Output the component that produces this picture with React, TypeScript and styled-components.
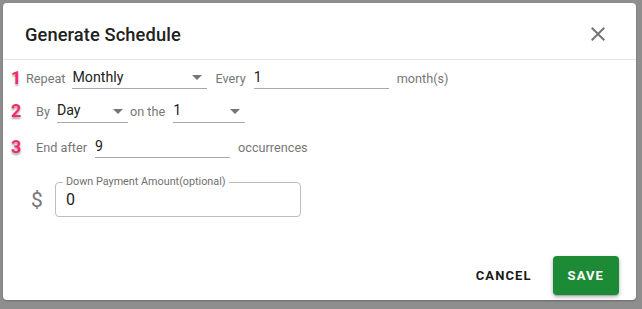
import { createGlobalStyle, styled } from "styled-components";

const GlobalStyle = createGlobalStyle`
    html, body {
        margin: 0;
        padding: 0;
        width: 642px;
        height: 309px;
        overflow: hidden;
        background: #8e8e8e;
        font-family: Roboto, "Liberation Sans", Arial, sans-serif;
    }
    #root {
        padding: 3px 0 0 3px;
    }
`;

const Dialog = styled.div`
    display: flex;
    flex-direction: column;
    width: 633px;
    height: 297px;
    background: #ffffff;
    border-radius: 4px;
    box-shadow: 0 1px 2px rgba(0, 0, 0, 0.25);
    box-sizing: border-box;
`;

const Header = styled.div`
    display: flex;
    align-items: center;
    justify-content: space-between;
    height: 57px;
    box-sizing: border-box;
    padding: 6px 26px 0 22px;
    border-bottom: 1px solid #e4e4e4;
    flex-shrink: 0;
`;

const Title = styled.h2`
    margin: 0;
    font-size: 18.3px;
    font-weight: 500;
    color: #212121;
    letter-spacing: 0.1px;
`;

const CloseButton = styled.button`
    display: flex;
    border: none;
    background: none;
    padding: 0;
    cursor: pointer;
`;

const Content = styled.div`
    display: flex;
    flex-direction: column;
    padding: 2px 0 0 8px;
    flex-grow: 1;
`;

type RowProps = {
    $height: number;
};

const Row = styled.div<RowProps>`
    display: flex;
    align-items: center;
    height: ${({ $height }) => $height}px;
`;

const StepNumber = styled.span`
    width: 10px;
    text-align: center;
    font-size: 18px;
    font-weight: 700;
    color: #f32a6b;
    text-shadow: 0 2px 2px rgba(0, 0, 0, 0.35);
    margin-top: -2px;
`;

type LabelProps = {
    $left?: number;
    $right?: number;
};

const Label = styled.span<LabelProps>`
    font-size: 12.7px;
    color: #777777;
    margin-left: ${({ $left }) => $left ?? 8}px;
    margin-right: ${({ $right }) => $right ?? 8}px;
    white-space: nowrap;
`;

type FieldProps = {
    $width: number;
};

const Field = styled.div<FieldProps>`
    position: relative;
    display: flex;
    align-items: center;
    width: ${({ $width }) => $width}px;
    height: 22px;
    border-bottom: 1px solid #a8a8a8;
    font-size: 14.2px;
    color: #222222;
    box-sizing: border-box;
    padding-bottom: 2px;
`;

const Arrow = styled.span`
    position: absolute;
    right: 5px;
    top: 8px;
    width: 0;
    height: 0;
    border-left: 5px solid transparent;
    border-right: 5px solid transparent;
    border-top: 5px solid #757575;
`;

const MoneyRow = styled.div`
    display: flex;
    align-items: center;
    margin-top: 17px;
    padding-left: 20px;
    gap: 14px;
`;

const Dollar = styled.span`
    font-size: 21px;
    color: #777777;
    width: 10px;
`;

const Outlined = styled.div`
    position: relative;
    display: flex;
    align-items: center;
    width: 246px;
    height: 35px;
    border: 1px solid #bdbdbd;
    border-radius: 4px;
    box-sizing: border-box;
    padding-left: 10px;
    font-size: 16px;
    color: #222222;
`;

const OutlinedLabel = styled.span`
    position: absolute;
    top: -7px;
    left: 7px;
    padding: 0 3px 0 3px;
    background: #ffffff;
    font-size: 10.8px;
    color: #6f6f6f;
    line-height: 12px;
`;

const Footer = styled.div`
    display: flex;
    align-items: center;
    justify-content: flex-end;
    gap: 13px;
    padding: 0 17px 5px 0;
    margin-top: auto;
`;

type ActionProps = {
    $primary?: boolean;
};

const Action = styled.button<ActionProps>`
    height: 39px;
    padding: 0 ${({ $primary }) => ($primary ? 15 : 8)}px;
    border: none;
    border-radius: 4px;
    font-family: Roboto, "Liberation Sans", Arial, sans-serif;
    font-size: 13px;
    font-weight: 700;
    letter-spacing: 1.1px;
    color: ${({ $primary }) => ($primary ? "#ffffff" : "#1a1a1a")};
    background: ${({ $primary }) => ($primary ? "#1d8a35" : "transparent")};
    box-shadow: ${({ $primary }) =>
        $primary ? "0 2px 4px rgba(0,0,0,0.3), 0 1px 1px rgba(0,0,0,0.15)" : "none"};
    cursor: pointer;
`;

const CloseIcon = () => (
    <svg width="24" height="24" viewBox="0 0 24 24">
        <path
            fill="#757575"
            d="M19 6.41 17.59 5 12 10.59 6.41 5 5 6.41 10.59 12 5 17.59 6.41 19 12 13.41 17.59 19 19 17.59 13.41 12z"
        />
    </svg>
);

const App = () => {
    return (
        <>
            <GlobalStyle />
            <Dialog>
                <Header>
                    <Title>Generate Schedule</Title>
                    <CloseButton>
                        <CloseIcon />
                    </CloseButton>
                </Header>

                <Content>
                    <Row $height={32}>
                        <StepNumber>1</StepNumber>
                        <Label $left={5} $right={7}>Repeat</Label>
                        <Field $width={135}>
                            Monthly
                            <Arrow />
                        </Field>
                        <Label>Every</Label>
                        <Field $width={135}>1</Field>
                        <Label>month(s)</Label>
                    </Row>

                    <Row $height={35}>
                        <StepNumber>2</StepNumber>
                        <Label $left={15} $right={7}>By</Label>
                        <Field $width={71}>
                            Day
                            <Arrow />
                        </Field>
                        <Label $left={2}>on the</Label>
                        <Field $width={72}>
                            1
                            <Arrow />
                        </Field>
                    </Row>

                    <Row $height={36}>
                        <StepNumber>3</StepNumber>
                        <Label $left={15}>End after</Label>
                        <Field $width={135}>9</Field>
                        <Label>occurrences</Label>
                    </Row>

                    <MoneyRow>
                        <Dollar>$</Dollar>
                        <Outlined>
                            <OutlinedLabel>Down Payment Amount(optional)</OutlinedLabel>
                            0
                        </Outlined>
                    </MoneyRow>
                </Content>

                <Footer>
                    <Action>CANCEL</Action>
                    <Action $primary>SAVE</Action>
                </Footer>
            </Dialog>
        </>
    );
};

export default App;
